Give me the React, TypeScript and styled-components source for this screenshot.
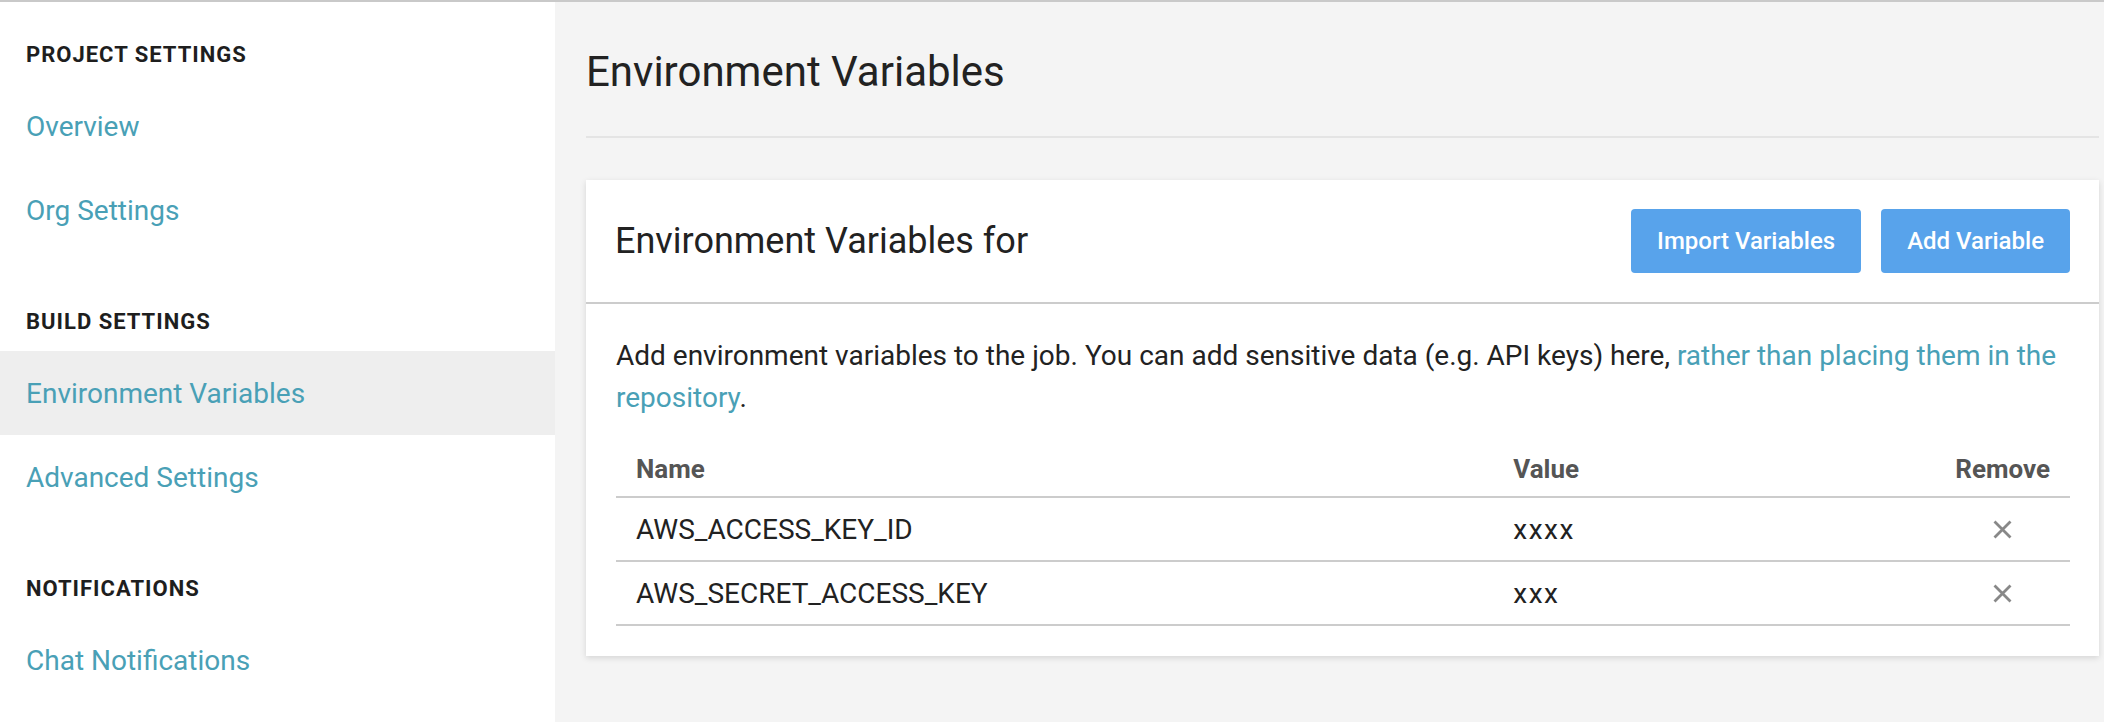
import React from "react";
import styled, { createGlobalStyle } from "styled-components";

const GlobalStyle = createGlobalStyle`
  html, body {
    margin: 0;
    padding: 0;
  }
  body {
    font-family: Roboto, "Liberation Sans", Arial, sans-serif;
    background: #f4f4f4;
    color: #222222;
    -webkit-font-smoothing: antialiased;
  }
  *, *::before, *::after {
    box-sizing: border-box;
  }
`;

const Page = styled.div`
  display: flex;
  min-height: 722px;
  border-top: 2px solid #c9c9c9;
`;

/* ---------- Sidebar ---------- */

const Sidebar = styled.nav`
  width: 555px;
  flex: none;
  background: #ffffff;
  padding-top: 38px;
`;

const Section = styled.section`
  & + & {
    margin-top: 55px;
  }
`;

const SectionTitle = styled.h3`
  margin: 0 0 14px;
  padding-left: 26px;
  font-size: 22px;
  line-height: 30px;
  font-weight: 700;
  letter-spacing: 1px;
  color: #1e1e1e;
  text-transform: uppercase;
`;

const NavItem = styled.a<{ $active?: boolean }>`
  display: flex;
  align-items: center;
  height: 84px;
  padding-left: 26px;
  font-size: 28px;
  color: #49a0b6;
  text-decoration: none;
  cursor: pointer;
  background: ${(p) => (p.$active ? "#eeeeee" : "transparent")};
`;

/* ---------- Main ---------- */

const Main = styled.main`
  flex: 1;
  min-width: 0;
  padding: 45px 5px 0 31px;
`;

const PageHeader = styled.header`
  padding-bottom: 39px;
  border-bottom: 2px solid #e4e4e4;
`;

const PageTitle = styled.h1`
  margin: 0;
  font-size: 42px;
  line-height: 50px;
  font-weight: 400;
  color: #222222;
`;

const Card = styled.div`
  margin-top: 42px;
  background: #ffffff;
  box-shadow: 0 2px 6px rgba(0, 0, 0, 0.13);
`;

const CardHeader = styled.div`
  display: flex;
  align-items: center;
  justify-content: space-between;
  height: 124px;
  padding: 0 29px 0 29px;
  border-bottom: 2px solid #cccccc;
`;

const CardTitle = styled.h2`
  margin: 0;
  font-size: 36px;
  line-height: 44px;
  font-weight: 400;
  color: #222222;
`;

const Actions = styled.div`
  display: flex;
  gap: 20px;
`;

const Button = styled.button`
  height: 64px;
  padding: 0 26px;
  border: none;
  border-radius: 4px;
  background: #58a3eb;
  color: #ffffff;
  font-family: inherit;
  font-size: 24px;
  font-weight: 500;
  cursor: pointer;
`;

const CardBody = styled.div`
  padding: 31px 29px 30px 30px;
`;

const Intro = styled.p`
  margin: 0 0 15px;
  font-size: 28px;
  line-height: 42px;
  color: #222222;
`;

const Link = styled.a`
  color: #49a0b6;
  text-decoration: none;
  cursor: pointer;
`;

const Table = styled.div`
  display: grid;
  grid-template-columns: minmax(0, 1fr) 442px max-content;
`;

const Row = styled.div`
  display: contents;
`;

const Cell = styled.div<{ $head?: boolean; $center?: boolean }>`
  display: flex;
  align-items: center;
  justify-content: ${(p) => (p.$center ? "center" : "flex-start")};
  height: 64px;
  padding: ${(p) => (p.$head ? "7px 20px 0" : "0 20px")};
  border-bottom: 2px solid #cccccc;
  font-size: ${(p) => (p.$head ? "26px" : "28px")};
  font-weight: ${(p) => (p.$head ? 700 : 400)};
  color: ${(p) => (p.$head ? "#555555" : "#222222")};
  white-space: nowrap;
`;

const Value = styled.span`
  letter-spacing: 1.5px;
`;

const RemoveButton = styled.button`
  display: flex;
  align-items: center;
  justify-content: center;
  padding: 0;
  border: none;
  background: transparent;
  cursor: pointer;
`;

const CloseIcon = () => (
  <svg width="19" height="19" viewBox="0 0 19 19" aria-hidden="true">
    <path
      d="M1.5 1.5 L17.5 17.5 M17.5 1.5 L1.5 17.5"
      stroke="#888888"
      strokeWidth="2.8"
      fill="none"
    />
  </svg>
);

const variables = [
  { name: "AWS_ACCESS_KEY_ID", value: "xxxx" },
  { name: "AWS_SECRET_ACCESS_KEY", value: "xxx" },
];

export default function App() {
  return (
    <>
      <GlobalStyle />
      <Page>
        <Sidebar>
          <Section>
            <SectionTitle>Project Settings</SectionTitle>
            <NavItem>Overview</NavItem>
            <NavItem>Org Settings</NavItem>
          </Section>
          <Section>
            <SectionTitle>Build Settings</SectionTitle>
            <NavItem $active>Environment Variables</NavItem>
            <NavItem>Advanced Settings</NavItem>
          </Section>
          <Section>
            <SectionTitle>Notifications</SectionTitle>
            <NavItem>Chat Notifications</NavItem>
          </Section>
        </Sidebar>
        <Main>
          <PageHeader>
            <PageTitle>Environment Variables</PageTitle>
          </PageHeader>
          <Card>
            <CardHeader>
              <CardTitle>Environment Variables for</CardTitle>
              <Actions>
                <Button>Import Variables</Button>
                <Button>Add Variable</Button>
              </Actions>
            </CardHeader>
            <CardBody>
              <Intro>
                Add environment variables to the job. You can add sensitive data
                (e.g. API keys) here,{" "}
                <Link>rather than placing them in the repository</Link>.
              </Intro>
              <Table>
                <Row>
                  <Cell $head>Name</Cell>
                  <Cell $head>Value</Cell>
                  <Cell $head $center>
                    Remove
                  </Cell>
                </Row>
                {variables.map((v) => (
                  <Row key={v.name}>
                    <Cell>{v.name}</Cell>
                    <Cell>
                      <Value>{v.value}</Value>
                    </Cell>
                    <Cell $center>
                      <RemoveButton aria-label={`Remove ${v.name}`}>
                        <CloseIcon />
                      </RemoveButton>
                    </Cell>
                  </Row>
                ))}
              </Table>
            </CardBody>
          </Card>
        </Main>
      </Page>
    </>
  );
}
